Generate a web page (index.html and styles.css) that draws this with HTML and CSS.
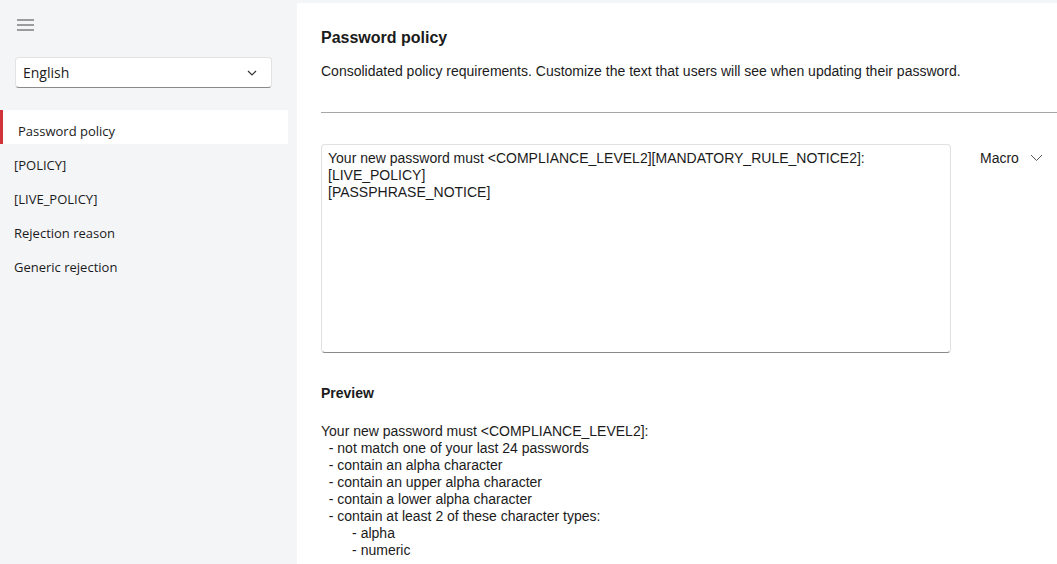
FILE: index.html
```html
<!DOCTYPE html>
<html lang="en">
<head>
    <meta charset="UTF-8">
    <title>Password policy</title>
    <link rel="stylesheet" href="styles.css">
</head>
<body>
    <aside class="sidebar">
        <button class="menu-btn" aria-label="Menu">
            <svg width="18" height="12" viewBox="0 0 18 12"><path d="M0 1h17M0 6h17M0 11h17" stroke="#444" stroke-width="1.2" fill="none"/></svg>
        </button>
        <div class="lang-select">
            <span>English</span>
            <svg width="10" height="6" viewBox="0 0 10 6"><path d="M1 1l4 4 4-4" stroke="#333" stroke-width="1.2" fill="none"/></svg>
        </div>
        <nav class="nav">
            <a class="nav-item active">Password policy</a>
            <a class="nav-item">[POLICY]</a>
            <a class="nav-item">[LIVE_POLICY]</a>
            <a class="nav-item">Rejection reason</a>
            <a class="nav-item">Generic rejection</a>
        </nav>
    </aside>

    <main class="content">
        <h1 class="title">Password policy</h1>
        <p class="subtitle">Consolidated policy requirements. Customize the text that users will see when updating their password.</p>
        <hr class="divider">

        <div class="editor-row">
            <div class="editor">Your new password must &lt;COMPLIANCE_LEVEL2][MANDATORY_RULE_NOTICE2]:
[LIVE_POLICY]
[PASSPHRASE_NOTICE]</div>
            <div class="macro">
                <span>Macro</span>
                <svg width="13" height="8" viewBox="0 0 13 8"><path d="M1 1l5.5 5.5L12 1" stroke="#555" stroke-width="1" fill="none"/></svg>
            </div>
        </div>

        <h2 class="preview-title">Preview</h2>
        <div class="preview">Your new password must &lt;COMPLIANCE_LEVEL2]:
  - not match one of your last 24 passwords
  - contain an alpha character
  - contain an upper alpha character
  - contain a lower alpha character
  - contain at least 2 of these character types:
        - alpha
        - numeric</div>
    </main>
</body>
</html>
```

FILE: styles.css
```css
body {
    margin: 0;
    display: flex;
    height: 564px;
    overflow: hidden;
    background-color: #f4f5f7;
    color: #1b1b1b;
    font-family: "Liberation Sans", Arial, sans-serif;
}
.sidebar {
    width: 297px;
    flex-shrink: 0;
    font-family: "Open Sans", "Noto Sans", sans-serif;
}
.menu-btn {
    display: block;
    margin: 19px 0 0 17px;
    padding: 0;
    border: none;
    background: transparent;
    line-height: 0;
}
.lang-select {
    display: flex;
    justify-content: space-between;
    align-items: center;
    margin: 26px 25px 0 15px;
    height: 29px;
    padding: 0 14px 0 7px;
    background: #fff;
    border: 1px solid #e3e3e3;
    border-bottom-color: #8a8a8a;
    border-radius: 4px;
    font-size: 14px;
}
.nav {
    margin-top: 22px;
}
.nav-item {
    display: block;
    height: 30px;
    padding-top: 4px;
    line-height: 34px;
    padding-left: 14px;
    font-size: 13px;
}
.nav-item.active {
    margin-right: 9px;
    padding-left: 15px;
    background: #fff;
    border-left: 3px solid #d13438;
}
.content {
    flex: 1;
    margin-top: 3px;
    background: #fff;
    padding-left: 24px;
}
.title {
    margin: 25px 0 0;
    font-size: 16px;
    line-height: 20px;
}
.subtitle {
    margin: 15px 0 0;
    font-size: 14px;
    line-height: 17px;
}
.divider {
    margin: 32px 0 0;
    border: none;
    border-top: 1px solid #a6a6a6;
}
.editor-row {
    display: flex;
    align-items: flex-start;
    margin-top: 31px;
    padding-right: 15px;
}
.editor {
    width: 630px;
    height: 209px;
    box-sizing: border-box;
    padding: 5px 6px;
    border: 1px solid #e0e0e0;
    border-bottom-color: #8a8a8a;
    border-radius: 4px;
    font-size: 14px;
    line-height: 17px;
    white-space: pre-wrap;
}
.macro {
    display: flex;
    align-items: center;
    gap: 11px;
    margin-left: 29px;
    margin-top: 6px;
    font-size: 14px;
}
.preview-title {
    margin: 32px 0 0;
    font-size: 14px;
    line-height: 17px;
}
.preview {
    margin-top: 21px;
    font-size: 14px;
    line-height: 17px;
    white-space: pre;
}
```
